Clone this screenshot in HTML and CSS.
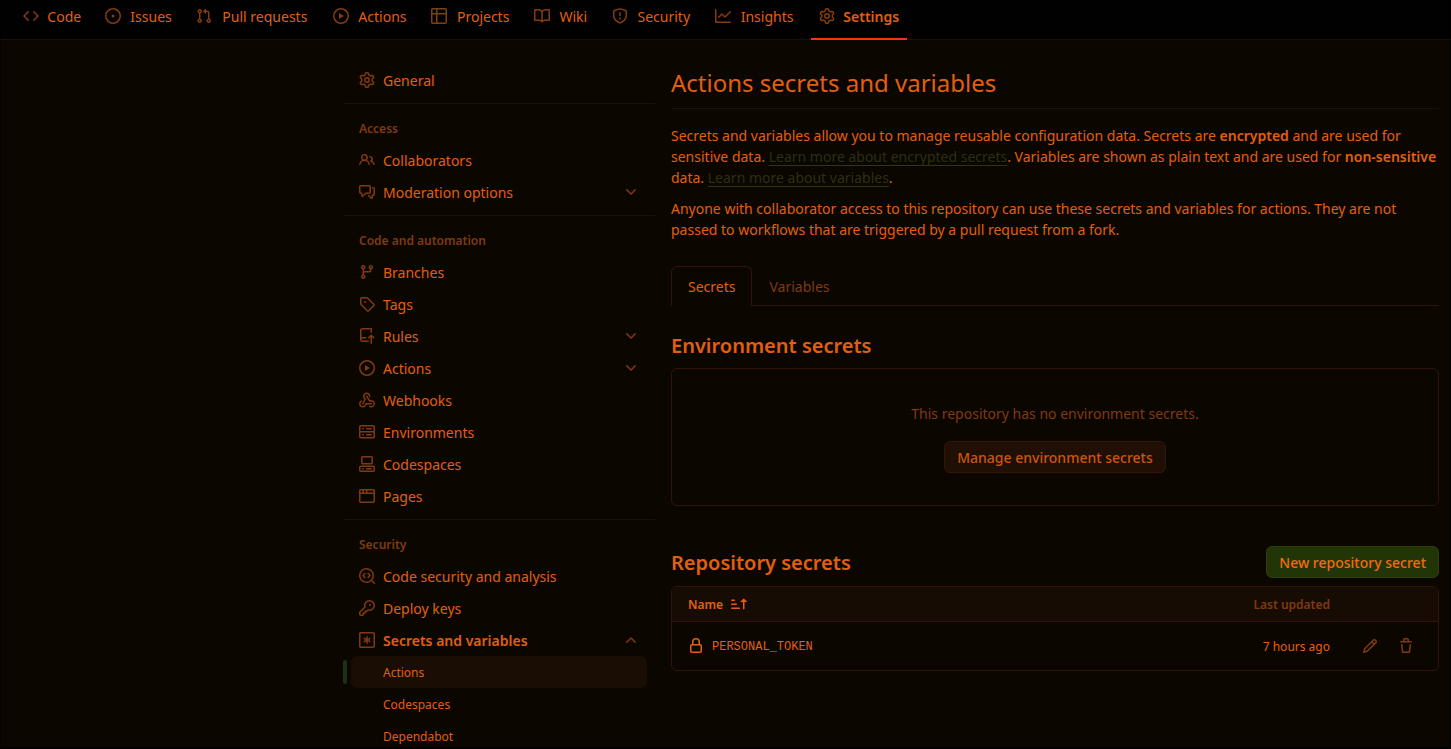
FILE: index.html
```html
<!DOCTYPE html>
<html lang="en">
<head>
<meta charset="utf-8">
<title>Actions secrets and variables</title>
<link rel="stylesheet" href="styles.css">
</head>
<body>
<svg class="sprite" aria-hidden="true">
  <symbol id="gear" viewBox="0 0 16 16"><path d="M8 0a8.2 8.2 0 0 1 .701.031C9.444.095 9.99.645 10.16 1.29l.288 1.107c.018.066.079.158.212.224.231.114.454.243.668.386.123.082.233.09.299.071l1.103-.303c.644-.176 1.392.021 1.82.63.27.385.506.792.704 1.218.315.675.111 1.422-.364 1.891l-.814.806c-.049.048-.098.147-.088.294.016.257.016.515 0 .772-.01.147.038.246.088.294l.814.806c.475.469.679 1.216.364 1.891a7.977 7.977 0 0 1-.704 1.217c-.428.61-1.176.807-1.82.63l-1.102-.302c-.067-.019-.177-.011-.3.071a5.909 5.909 0 0 1-.668.386c-.133.066-.194.158-.211.224l-.29 1.106c-.168.646-.715 1.196-1.458 1.26a8.006 8.006 0 0 1-1.402 0c-.743-.064-1.289-.614-1.458-1.26l-.289-1.106c-.018-.066-.079-.158-.212-.224a5.738 5.738 0 0 1-.668-.386c-.123-.082-.233-.09-.299-.071l-1.103.303c-.644.176-1.392-.021-1.82-.63a8.12 8.12 0 0 1-.704-1.218c-.315-.675-.111-1.422.363-1.891l.815-.806c.05-.048.098-.147.088-.294a6.214 6.214 0 0 1 0-.772c.01-.147-.038-.246-.088-.294l-.815-.806C.635 6.045.431 5.298.746 4.623a7.92 7.92 0 0 1 .704-1.217c.428-.61 1.176-.807 1.82-.63l1.102.302c.067.019.177.011.3-.071.214-.143.437-.272.668-.386.133-.066.194-.158.211-.224l.29-1.106C6.009.645 6.556.095 7.299.03 7.53.01 7.764 0 8 0Zm-.571 1.525c-.036.003-.108.036-.137.146l-.289 1.105c-.147.561-.549.967-.998 1.189-.173.086-.34.183-.5.29-.417.278-.97.423-1.529.27l-1.103-.303c-.109-.03-.175.016-.195.045-.22.312-.412.644-.573.99-.014.031-.021.11.059.19l.815.806c.411.406.562.957.53 1.456a4.709 4.709 0 0 0 0 .582c.032.499-.119 1.05-.53 1.456l-.815.806c-.081.08-.073.159-.059.19.162.346.353.677.573.989.02.03.085.076.195.046l1.102-.303c.56-.153 1.113-.008 1.53.27.161.107.328.204.501.29.447.222.85.629.997 1.189l.289 1.105c.029.109.101.143.137.146a6.6 6.6 0 0 0 1.142 0c.036-.003.108-.036.137-.146l.289-1.105c.147-.561.549-.967.998-1.189.173-.086.34-.183.5-.29.417-.278.97-.423 1.529-.27l1.103.303c.109.029.175-.016.195-.045.22-.313.411-.644.573-.99.014-.031.021-.11-.059-.19l-.815-.806c-.411-.406-.562-.957-.53-1.456a4.709 4.709 0 0 0 0-.582c-.032-.499.119-1.05.53-1.456l.815-.806c.081-.08.073-.159.059-.19a6.464 6.464 0 0 0-.573-.989c-.02-.03-.085-.076-.195-.046l-1.102.303c-.56.153-1.113.008-1.53-.27a4.44 4.44 0 0 0-.501-.29c-.447-.222-.85-.629-.997-1.189l-.289-1.105c-.029-.11-.101-.143-.137-.146a6.6 6.6 0 0 0-1.142 0ZM11 8a3 3 0 1 1-6 0 3 3 0 0 1 6 0ZM9.5 8a1.5 1.5 0 1 0-3.001.001A1.5 1.5 0 0 0 9.5 8Z"/></symbol>
  <symbol id="code" viewBox="0 0 16 16"><path d="m11.28 3.22 4.25 4.25a.75.75 0 0 1 0 1.06l-4.25 4.25a.749.749 0 0 1-1.275-.326.749.749 0 0 1 .215-.734L13.94 8l-3.72-3.72a.749.749 0 0 1 .326-1.275.749.749 0 0 1 .734.215Zm-6.56 0a.751.751 0 0 1 1.042.018.751.751 0 0 1 .018 1.042L2.06 8l3.72 3.72a.749.749 0 0 1-.326 1.275.749.749 0 0 1-.734-.215L.47 8.53a.75.75 0 0 1 0-1.06Z"/></symbol>
  <symbol id="issue" viewBox="0 0 16 16"><path d="M8 9.5a1.5 1.5 0 1 0 0-3 1.5 1.5 0 0 0 0 3Z"/><path d="M8 0a8 8 0 1 1 0 16A8 8 0 0 1 8 0ZM1.5 8a6.5 6.5 0 1 0 13 0 6.5 6.5 0 0 0-13 0Z"/></symbol>
  <symbol id="pull" viewBox="0 0 16 16"><path d="M1.5 3.25a2.25 2.25 0 1 1 3 2.122v5.256a2.251 2.251 0 1 1-1.5 0V5.372A2.25 2.25 0 0 1 1.5 3.25Zm5.677-.177L9.573.677A.25.25 0 0 1 10 .854V2.5h1A2.5 2.5 0 0 1 13.5 5v5.628a2.251 2.251 0 1 1-1.5 0V5a1 1 0 0 0-1-1h-1v1.646a.25.25 0 0 1-.427.177L7.177 3.427a.25.25 0 0 1 0-.354ZM3.75 2.5a.75.75 0 1 0 0 1.5.75.75 0 0 0 0-1.5Zm0 9.5a.75.75 0 1 0 0 1.5.75.75 0 0 0 0-1.5Zm8.25.75a.75.75 0 1 0 1.5 0 .75.75 0 0 0-1.5 0Z"/></symbol>
  <symbol id="play" viewBox="0 0 16 16"><path d="M8 0a8 8 0 1 1 0 16A8 8 0 0 1 8 0ZM1.5 8a6.5 6.5 0 1 0 13 0 6.5 6.5 0 0 0-13 0Zm4.879-2.773 4.264 2.559a.25.25 0 0 1 0 .428l-4.264 2.559A.25.25 0 0 1 6 10.559V5.442a.25.25 0 0 1 .379-.215Z"/></symbol>
  <symbol id="table" viewBox="0 0 16 16"><path d="M0 1.75C0 .784.784 0 1.75 0h12.5C15.216 0 16 .784 16 1.75v12.5A1.75 1.75 0 0 1 14.25 16H1.75A1.75 1.75 0 0 1 0 14.25ZM6.5 6.5v8h7.75a.25.25 0 0 0 .25-.25V6.5Zm8-1.5V1.75a.25.25 0 0 0-.25-.25H6.5V5Zm-13 1.5v7.75c0 .138.112.25.25.25H5v-8ZM5 5V1.5H1.75a.25.25 0 0 0-.25.25V5Z"/></symbol>
  <symbol id="book" viewBox="0 0 16 16"><path d="M0 1.75A.75.75 0 0 1 .75 1h4.253c1.227 0 2.317.59 3 1.501A3.743 3.743 0 0 1 11.006 1h4.245a.75.75 0 0 1 .75.75v10.5a.75.75 0 0 1-.75.75h-4.507a2.25 2.25 0 0 0-1.591.659l-.622.621a.75.75 0 0 1-1.06 0l-.622-.621A2.25 2.25 0 0 0 5.258 13H.75a.75.75 0 0 1-.75-.75Zm7.251 10.324.004-5.073-.002-2.253A2.25 2.25 0 0 0 5.003 2.5H1.5v9h3.757a3.75 3.75 0 0 1 1.994.574ZM8.755 4.75l-.004 7.322a3.752 3.752 0 0 1 1.992-.572H14.5v-9h-3.495a2.25 2.25 0 0 0-2.25 2.25Z"/></symbol>
  <symbol id="shield" viewBox="0 0 16 16"><path d="M7.467.133a1.748 1.748 0 0 1 1.066 0l5.25 1.68A1.75 1.75 0 0 1 15 3.48V7c0 1.566-.32 3.182-1.303 4.682-.983 1.498-2.585 2.813-5.032 3.855a1.697 1.697 0 0 1-1.33 0c-2.447-1.042-4.049-2.357-5.032-3.855C1.32 10.182 1 8.566 1 7V3.48a1.75 1.75 0 0 1 1.217-1.667Zm.61 1.429a.25.25 0 0 0-.153 0l-5.25 1.68a.25.25 0 0 0-.174.238V7c0 1.358.275 2.666 1.057 3.86.784 1.194 2.121 2.34 4.366 3.297a.196.196 0 0 0 .154 0c2.245-.956 3.582-2.104 4.366-3.298C13.225 9.666 13.5 8.36 13.5 7V3.48a.251.251 0 0 0-.174-.237ZM8.75 4.75v3a.75.75 0 0 1-1.5 0v-3a.75.75 0 0 1 1.5 0ZM9 10.5a1 1 0 1 1-2 0 1 1 0 0 1 2 0Z"/></symbol>
  <symbol id="graph" viewBox="0 0 16 16"><path d="M1.5 1.75V13.5h13.75a.75.75 0 0 1 0 1.5H.75a.75.75 0 0 1-.75-.75V1.75a.75.75 0 0 1 1.5 0Zm14.28 2.53-5.25 5.25a.75.75 0 0 1-1.06 0L7 7.06 4.28 9.78a.751.751 0 0 1-1.042-.018.751.751 0 0 1-.018-1.042l3.25-3.25a.75.75 0 0 1 1.06 0L10 7.94l4.72-4.72a.751.751 0 0 1 1.042.018.751.751 0 0 1 .018 1.042Z"/></symbol>
  <symbol id="people" viewBox="0 0 16 16"><path d="M2 5.5a3.5 3.5 0 1 1 5.898 2.549 5.508 5.508 0 0 1 3.034 4.084.75.75 0 1 1-1.482.235 4 4 0 0 0-7.9 0 .75.75 0 0 1-1.482-.236A5.507 5.507 0 0 1 3.102 8.05 3.493 3.493 0 0 1 2 5.5ZM11 4a3.001 3.001 0 0 1 2.22 5.018 5.01 5.01 0 0 1 2.56 3.012.749.749 0 0 1-.885.954.752.752 0 0 1-.549-.514 3.507 3.507 0 0 0-2.522-2.372.75.75 0 0 1-.574-.73v-.352a.75.75 0 0 1 .416-.672A1.5 1.5 0 0 0 11 5.5.75.75 0 0 1 11 4Zm-5.5-.5a2 2 0 1 0-.001 3.999A2 2 0 0 0 5.5 3.5Z"/></symbol>
  <symbol id="comments" viewBox="0 0 16 16"><path d="M1.75 1h8.5c.966 0 1.75.784 1.75 1.75v5.5A1.75 1.75 0 0 1 10.25 10H7.061l-2.574 2.573A1.458 1.458 0 0 1 2 11.543V10h-.25A1.75 1.75 0 0 1 0 8.25v-5.5C0 1.784.784 1 1.75 1ZM1.5 2.75v5.5c0 .138.112.25.25.25h1a.75.75 0 0 1 .75.75v2.19l2.72-2.72a.749.749 0 0 1 .53-.22h3.5a.25.25 0 0 0 .25-.25v-5.5a.25.25 0 0 0-.25-.25h-8.5a.25.25 0 0 0-.25.25Zm13 2a.25.25 0 0 0-.25-.25h-.5a.75.75 0 0 1 0-1.5h.5c.966 0 1.75.784 1.75 1.75v5.5A1.75 1.75 0 0 1 14.25 12H14v1.543a1.458 1.458 0 0 1-2.487 1.03L9.22 12.28a.749.749 0 0 1 .326-1.275.749.749 0 0 1 .734.215l2.22 2.22v-2.19a.75.75 0 0 1 .75-.75h1a.25.25 0 0 0 .25-.25Z"/></symbol>
  <symbol id="branch" viewBox="0 0 16 16"><path d="M9.5 3.25a2.25 2.25 0 1 1 3 2.122V6A2.5 2.5 0 0 1 10 8.5H6a1 1 0 0 0-1 1v1.128a2.251 2.251 0 1 1-1.5 0V5.372a2.25 2.25 0 1 1 1.5 0v1.836A2.493 2.493 0 0 1 6 7h4a1 1 0 0 0 1-1v-.628A2.25 2.25 0 0 1 9.5 3.25Zm-6 0a.75.75 0 1 0 1.5 0 .75.75 0 0 0-1.5 0Zm8.25-.75a.75.75 0 1 0 0 1.5.75.75 0 0 0 0-1.5ZM4.25 12a.75.75 0 1 0 0 1.5.75.75 0 0 0 0-1.5Z"/></symbol>
  <symbol id="tag" viewBox="0 0 16 16"><path d="M1 7.775V2.75C1 1.784 1.784 1 2.75 1h5.025c.464 0 .91.184 1.238.513l6.25 6.25a1.75 1.75 0 0 1 0 2.474l-5.026 5.026a1.75 1.75 0 0 1-2.474 0l-6.25-6.25A1.752 1.752 0 0 1 1 7.775Zm1.5 0c0 .066.026.13.073.177l6.25 6.25a.25.25 0 0 0 .354 0l5.025-5.025a.25.25 0 0 0 0-.354l-6.25-6.25a.25.25 0 0 0-.177-.073H2.75a.25.25 0 0 0-.25.25ZM6 5a1 1 0 1 1 0 2 1 1 0 0 1 0-2Z"/></symbol>
  <symbol id="repo-push" viewBox="0 0 16 16"><path d="M1 2.5A2.5 2.5 0 0 1 3.5 0h8.75a.75.75 0 0 1 .75.75v3.5a.75.75 0 0 1-1.5 0V1.5h-8a1 1 0 0 0-1 1v6.708A2.493 2.493 0 0 1 3.5 9h3.25a.75.75 0 0 1 0 1.5H3.5a1 1 0 0 0 0 2h5.75a.75.75 0 0 1 0 1.5H3.5A2.5 2.5 0 0 1 1 11.5Zm13.23 7.79-1.23-1.228v6.19a.75.75 0 0 1-1.5 0v-6.19l-1.22 1.23a.75.75 0 1 1-1.06-1.062l2.5-2.505a.75.75 0 0 1 1.06 0l2.51 2.505a.75.75 0 1 1-1.06 1.062Z"/></symbol>
  <symbol id="webhook" viewBox="0 0 16 16"><path d="M5.5 4.25a2.25 2.25 0 0 1 4.5 0 .75.75 0 0 0 1.5 0 3.75 3.75 0 1 0-6.14 2.889l-2.272 4.258a.75.75 0 0 0 1.324.706L7 7.25a.75.75 0 0 0-.309-1.015A2.25 2.25 0 0 1 5.5 4.25Z"/><path d="M7.364 3.607a.75.75 0 0 1 1.03.257l2.608 4.349a3.75 3.75 0 1 1-.628 6.785.75.75 0 0 1 .752-1.299 2.25 2.25 0 1 0-.033-3.88.75.75 0 0 1-1.03-.256L7.107 4.636a.75.75 0 0 1 .257-1.03Z"/><path d="M2.9 8.776A.75.75 0 0 1 2.625 9.8 2.25 2.25 0 1 0 6 11.75a.75.75 0 0 1 .75-.751h5.5a.75.75 0 0 1 0 1.5H7.425a3.751 3.751 0 1 1-5.55-3.998.75.75 0 0 1 1.024.274Z"/></symbol>
  <symbol id="server" viewBox="0 0 16 16"><path d="M1.75 1h12.5c.966 0 1.75.784 1.75 1.75v4c0 .372-.116.717-.314 1 .198.283.314.628.314 1v4a1.75 1.75 0 0 1-1.75 1.75H1.75A1.75 1.75 0 0 1 0 12.75v-4c0-.358.109-.707.314-1a1.739 1.739 0 0 1-.314-1v-4C0 1.784.784 1 1.75 1ZM1.5 2.75v4c0 .138.112.25.25.25h12.5a.25.25 0 0 0 .25-.25v-4a.25.25 0 0 0-.25-.25H1.75a.25.25 0 0 0-.25.25Zm.25 5.75a.25.25 0 0 0-.25.25v4c0 .138.112.25.25.25h12.5a.25.25 0 0 0 .25-.25v-4a.25.25 0 0 0-.25-.25ZM7 4.75A.75.75 0 0 1 7.75 4h4.5a.75.75 0 0 1 0 1.5h-4.5A.75.75 0 0 1 7 4.75ZM7.75 10h4.5a.75.75 0 0 1 0 1.5h-4.5a.75.75 0 0 1 0-1.5ZM3 4.75A.75.75 0 0 1 3.75 4h.5a.75.75 0 0 1 0 1.5h-.5A.75.75 0 0 1 3 4.75ZM3.75 10h.5a.75.75 0 0 1 0 1.5h-.5a.75.75 0 0 1 0-1.5Z"/></symbol>
  <symbol id="codespaces" viewBox="0 0 16 16"><path d="M0 11.25c0-.966.784-1.75 1.75-1.75h12.5c.966 0 1.75.784 1.75 1.75v3A1.75 1.75 0 0 1 14.25 16H1.75A1.75 1.75 0 0 1 0 14.25Zm2-9.5C2 .784 2.784 0 3.75 0h8.5C13.216 0 14 .784 14 1.75v5a1.75 1.75 0 0 1-1.75 1.75h-8.5A1.75 1.75 0 0 1 2 6.75Zm1.75-.25a.25.25 0 0 0-.25.25v5c0 .138.112.25.25.25h8.5a.25.25 0 0 0 .25-.25v-5a.25.25 0 0 0-.25-.25Zm-2 9.5a.25.25 0 0 0-.25.25v3c0 .138.112.25.25.25h12.5a.25.25 0 0 0 .25-.25v-3a.25.25 0 0 0-.25-.25Z"/><path d="M7 12.75a.75.75 0 0 1 .75-.75h4.5a.75.75 0 0 1 0 1.5h-4.5a.75.75 0 0 1-.75-.75Zm-4 0a.75.75 0 0 1 .75-.75h.5a.75.75 0 0 1 0 1.5h-.5a.75.75 0 0 1-.75-.75Z"/></symbol>
  <symbol id="browser" viewBox="0 0 16 16"><path d="M0 2.75C0 1.784.784 1 1.75 1h12.5c.966 0 1.75.784 1.75 1.75v10.5A1.75 1.75 0 0 1 14.25 15H1.75A1.75 1.75 0 0 1 0 13.25ZM14.5 6h-13v7.25c0 .138.112.25.25.25h12.5a.25.25 0 0 0 .25-.25Zm-6-3.5v2h6V2.75a.25.25 0 0 0-.25-.25ZM5 2.5v2h2v-2Zm-3.25 0a.25.25 0 0 0-.25.25V4.5h2v-2Z"/></symbol>
  <symbol id="codescan" viewBox="0 0 16 16"><path d="M8.47 4.97a.75.75 0 0 0 0 1.06L9.94 7.5 8.47 8.97a.75.75 0 1 0 1.06 1.06l2-2a.75.75 0 0 0 0-1.06l-2-2a.75.75 0 0 0-1.06 0ZM6.53 6.03a.75.75 0 0 0-1.06-1.06l-2 2a.75.75 0 0 0 0 1.06l2 2a.75.75 0 1 0 1.06-1.06L5.06 7.5l1.47-1.47Z"/><path d="M12.246 13.307a7.501 7.501 0 1 1 1.06-1.06l2.474 2.473a.749.749 0 0 1-.326 1.275.749.749 0 0 1-.734-.215ZM1.5 7.5a6.002 6.002 0 0 0 3.608 5.504 6.002 6.002 0 0 0 6.486-1.117.748.748 0 0 1 .292-.293A6 6 0 1 0 1.5 7.5Z"/></symbol>
  <symbol id="key" viewBox="0 0 16 16"><path d="M10.5 0a5.499 5.499 0 1 1-1.288 10.848l-.932.932a.749.749 0 0 1-.53.22H7v.75a.749.749 0 0 1-.22.53l-.5.5a.749.749 0 0 1-.53.22H5v.75a.749.749 0 0 1-.22.53l-.5.5a.749.749 0 0 1-.53.22h-2A1.75 1.75 0 0 1 0 14.25v-2c0-.199.079-.389.22-.53l4.932-4.932A5.5 5.5 0 0 1 10.5 0Zm-4 5.5c-.001.431.069.86.205 1.269a.75.75 0 0 1-.181.768L1.5 12.56v1.69c0 .138.112.25.25.25h1.69l.06-.06v-1.19a.75.75 0 0 1 .75-.75h1.19l.06-.06v-1.19a.75.75 0 0 1 .75-.75h1.19l1.023-1.025a.75.75 0 0 1 .768-.18A4 4 0 1 0 6.5 5.5ZM11 6a1 1 0 1 1 0-2 1 1 0 0 1 0 2Z"/></symbol>
  <symbol id="asterisk" viewBox="0 0 16 16"><path d="M0 1.75C0 .784.784 0 1.75 0h12.5C15.216 0 16 .784 16 1.75v12.5A1.75 1.75 0 0 1 14.25 16H1.75A1.75 1.75 0 0 1 0 14.25Zm1.75-.25a.25.25 0 0 0-.25.25v12.5c0 .138.112.25.25.25h12.5a.25.25 0 0 0 .25-.25V1.75a.25.25 0 0 0-.25-.25ZM8 4a.75.75 0 0 1 .75.75V6.7l1.69-.975a.75.75 0 0 1 .75 1.3L9.5 8l1.69.976a.75.75 0 0 1-.75 1.298L8.75 9.3v1.951a.75.75 0 0 1-1.5 0V9.299l-1.69.976a.75.75 0 0 1-.75-1.3L6.5 8l-1.69-.975a.75.75 0 0 1 .75-1.3l1.69.976V4.75A.75.75 0 0 1 8 4Z"/></symbol>
  <symbol id="down" viewBox="0 0 16 16"><path d="M12.78 5.22a.749.749 0 0 1 0 1.06l-4.25 4.25a.749.749 0 0 1-1.06 0L3.22 6.28a.749.749 0 1 1 1.06-1.06L8 8.939l3.72-3.719a.749.749 0 0 1 1.06 0Z"/></symbol>
  <symbol id="sort" viewBox="0 0 16 16"><path d="m12.927 2.573 3 3A.25.25 0 0 1 15.75 6H13.5v6.75a.75.75 0 0 1-1.5 0V6H9.75a.25.25 0 0 1-.177-.427l3-3a.25.25 0 0 1 .354 0ZM0 12.25a.75.75 0 0 1 .75-.75h7.5a.75.75 0 0 1 0 1.5H.75a.75.75 0 0 1-.75-.75Zm0-4a.75.75 0 0 1 .75-.75h4.5a.75.75 0 0 1 0 1.5H.75A.75.75 0 0 1 0 8.25Zm0-4a.75.75 0 0 1 .75-.75h2.5a.75.75 0 0 1 0 1.5H.75A.75.75 0 0 1 0 4.25Z"/></symbol>
  <symbol id="lock" viewBox="0 0 16 16"><path d="M4 4a4 4 0 0 1 8 0v2h.25c.966 0 1.75.784 1.75 1.75v5.5A1.75 1.75 0 0 1 12.25 15h-8.5A1.75 1.75 0 0 1 2 13.25v-5.5C2 6.784 2.784 6 3.75 6H4Zm8.25 3.5h-8.5a.25.25 0 0 0-.25.25v5.5c0 .138.112.25.25.25h8.5a.25.25 0 0 0 .25-.25v-5.5a.25.25 0 0 0-.25-.25ZM10.5 6V4a2.5 2.5 0 1 0-5 0v2Z"/></symbol>
  <symbol id="pencil" viewBox="0 0 16 16"><path d="M11.013 1.427a1.75 1.75 0 0 1 2.474 0l1.086 1.086a1.75 1.75 0 0 1 0 2.474l-8.61 8.61c-.21.21-.47.364-.756.445l-3.251.93a.75.75 0 0 1-.927-.928l.929-3.25c.081-.286.235-.547.445-.758l8.61-8.61Zm.176 4.823L9.75 4.81l-6.286 6.287a.253.253 0 0 0-.064.108l-.558 1.953 1.953-.558a.253.253 0 0 0 .108-.064Zm1.238-3.763a.25.25 0 0 0-.354 0L10.811 3.75l1.439 1.44 1.263-1.263a.25.25 0 0 0 0-.354Z"/></symbol>
  <symbol id="trash" viewBox="0 0 16 16"><path d="M11 1.75V3h2.25a.75.75 0 0 1 0 1.5H2.75a.75.75 0 0 1 0-1.5H5V1.75C5 .784 5.784 0 6.75 0h2.5C10.216 0 11 .784 11 1.75ZM4.496 6.675l.66 6.6a.25.25 0 0 0 .249.225h5.19a.25.25 0 0 0 .249-.225l.66-6.6a.75.75 0 0 1 1.492.149l-.66 6.6A1.748 1.748 0 0 1 10.595 15h-5.19a1.75 1.75 0 0 1-1.741-1.575l-.66-6.6a.75.75 0 1 1 1.492-.15ZM6.5 1.75V3h3V1.75a.25.25 0 0 0-.25-.25h-2.5a.25.25 0 0 0-.25.25Z"/></symbol>
</svg>

<nav class="topnav">
  <a class="tab"><svg class="icon"><use href="#code"/></svg><span data-content="Code">Code</span></a>
  <a class="tab"><svg class="icon"><use href="#issue"/></svg><span data-content="Issues">Issues</span></a>
  <a class="tab"><svg class="icon"><use href="#pull"/></svg><span data-content="Pull requests">Pull requests</span></a>
  <a class="tab"><svg class="icon"><use href="#play"/></svg><span data-content="Actions">Actions</span></a>
  <a class="tab"><svg class="icon"><use href="#table"/></svg><span data-content="Projects">Projects</span></a>
  <a class="tab"><svg class="icon"><use href="#book"/></svg><span data-content="Wiki">Wiki</span></a>
  <a class="tab"><svg class="icon"><use href="#shield"/></svg><span data-content="Security">Security</span></a>
  <a class="tab"><svg class="icon"><use href="#graph"/></svg><span data-content="Insights">Insights</span></a>
  <a class="tab selected"><svg class="icon"><use href="#gear"/></svg><span data-content="Settings">Settings</span></a>
</nav>

<div class="layout">
  <aside class="sidebar">
    <a class="item"><svg class="icon"><use href="#gear"/></svg>General</a>
    <hr class="divider">
    <h3 class="group">Access</h3>
    <a class="item"><svg class="icon"><use href="#people"/></svg>Collaborators</a>
    <a class="item"><svg class="icon"><use href="#comments"/></svg>Moderation options<svg class="icon chevron"><use href="#down"/></svg></a>
    <hr class="divider">
    <h3 class="group">Code and automation</h3>
    <a class="item"><svg class="icon"><use href="#branch"/></svg>Branches</a>
    <a class="item"><svg class="icon"><use href="#tag"/></svg>Tags</a>
    <a class="item"><svg class="icon"><use href="#repo-push"/></svg>Rules<svg class="icon chevron"><use href="#down"/></svg></a>
    <a class="item"><svg class="icon"><use href="#play"/></svg>Actions<svg class="icon chevron"><use href="#down"/></svg></a>
    <a class="item"><svg class="icon"><use href="#webhook"/></svg>Webhooks</a>
    <a class="item"><svg class="icon"><use href="#server"/></svg>Environments</a>
    <a class="item"><svg class="icon"><use href="#codespaces"/></svg>Codespaces</a>
    <a class="item"><svg class="icon"><use href="#browser"/></svg>Pages</a>
    <hr class="divider">
    <h3 class="group">Security</h3>
    <a class="item"><svg class="icon"><use href="#codescan"/></svg>Code security and analysis</a>
    <a class="item"><svg class="icon"><use href="#key"/></svg>Deploy keys</a>
    <a class="item open"><svg class="icon"><use href="#asterisk"/></svg>Secrets and variables<svg class="icon chevron up"><use href="#down"/></svg></a>
    <a class="item sub current">Actions</a>
    <a class="item sub">Codespaces</a>
    <a class="item sub">Dependabot</a>
  </aside>

  <main class="main">
    <h1 class="title">Actions secrets and variables</h1>
    <p class="text">Secrets and variables allow you to manage reusable configuration data. Secrets are <strong>encrypted</strong> and are used for sensitive data. <a class="link">Learn more about encrypted secrets</a>. Variables are shown as plain text and are used for <strong>non-sensitive</strong> data. <a class="link">Learn more about variables</a>.</p>
    <p class="text">Anyone with collaborator access to this repository can use these secrets and variables for actions. They are not passed to workflows that are triggered by a pull request from a fork.</p>

    <div class="tabs">
      <a class="tabs-item active">Secrets</a>
      <a class="tabs-item">Variables</a>
    </div>

    <h2 class="heading">Environment secrets</h2>
    <section class="blank">
      <p class="blank-text">This repository has no environment secrets.</p>
      <button class="btn">Manage environment secrets</button>
    </section>

    <div class="heading-row">
      <h2 class="heading">Repository secrets</h2>
      <button class="btn primary">New repository secret</button>
    </div>
    <section class="secrets">
      <div class="row head">
        <span class="name">Name<svg class="icon"><use href="#sort"/></svg></span>
        <span class="updated">Last updated</span>
      </div>
      <div class="row">
        <span class="name"><svg class="icon"><use href="#lock"/></svg><code class="secret">PERSONAL_TOKEN</code></span>
        <span class="updated">7 hours ago</span>
        <svg class="icon action"><use href="#pencil"/></svg>
        <svg class="icon action"><use href="#trash"/></svg>
      </div>
    </section>
  </main>
</div>
</body>
</html>
```

FILE: styles.css
```css
:root {
  --bg: #0c0600;
  --fg: #e06010;
  --muted: #803a10;
  --border: #2e1507;
  --faint: #1d0f06;
}

* { box-sizing: border-box; }

body {
  position: relative;
  margin: 0;
  height: 749px;
  overflow: hidden;
  background: var(--bg);
  color: var(--fg);
  font: 14px/21px "Noto Sans", sans-serif;
}

/* Dark window edge over the page */
body::after {
  content: "";
  position: absolute;
  inset: 0;
  border: solid rgba(0, 0, 0, 0.6);
  border-width: 0 1px 2px;
  pointer-events: none;
}

h1, h2, h3, p { margin: 0; }
strong { font-weight: 600; }

.sprite { display: none; }

.icon {
  width: 16px;
  height: 16px;
  flex: none;
  fill: currentColor;
}

/* Repository navigation */
.topnav {
  display: flex;
  gap: 8px;
  height: 40px;
  padding-left: 14.6px;
  background: #010101;
  border-bottom: 1px solid var(--faint);
}

.tab {
  display: flex;
  align-items: center;
  gap: 8px;
  height: 40px;
  padding: 0 8px 8px;
}

.tab .icon { color: #843c10; }

.tab span {
  padding-left: 0.4px;
  text-align: center;
}

.tab:not(.selected) span { margin-right: -0.35px; }

.tab span::before {
  content: attr(data-content);
  display: block;
  height: 0;
  overflow: hidden;
  visibility: hidden;
  font-weight: 600;
}

.tab.selected {
  margin-left: 0.6px;
  font-weight: 600;
  padding-bottom: 6px;
  border-bottom: 2px solid #f63312;
}

/* Page columns */
.layout {
  display: flex;
  gap: 16px;
  padding: 24px 12px 0 343px;
}

.sidebar {
  width: 312px;
  flex: none;
}

.item {
  display: flex;
  align-items: center;
  gap: 8px;
  height: 32px;
  margin: 0 8px;
  padding: 0 8px;
  border-radius: 6px;
}

.item .icon { color: var(--muted); }
.item .chevron { margin-left: auto; }
.item .up { transform: rotate(180deg); }
.item.open { font-weight: 600; }

.item.sub {
  position: relative;
  padding-left: 32px;
  font-size: 12px;
}

.item.current { background: #1a0d04; }

.item.current::before {
  content: "";
  position: absolute;
  left: -8px;
  top: 4px;
  width: 4px;
  height: 24px;
  border-radius: 2px;
  background: #1d3213;
}

.divider {
  height: 1px;
  margin: 7px 0 8px;
  border: 0;
  background: var(--faint);
}

.group {
  height: 32px;
  padding-left: 16px;
  color: var(--muted);
  font-size: 12px;
  font-weight: 600;
  line-height: 33px;
}

/* Main column */
.main { flex: 1; min-width: 0; }

.title {
  height: 45px;
  margin-bottom: 16px;
  border-bottom: 1px solid #220f05;
  font-size: 24px;
  font-weight: 400;
  line-height: 38px;
}

.text { margin-bottom: 10px; }

.link {
  color: #2c2f13;
  text-decoration: underline;
  text-decoration-color: #2d3514;
  text-underline-offset: 3.2px;
}

.tabs {
  display: flex;
  height: 40px;
  margin: 26px 0 27px;
  border-bottom: 1px solid var(--border);
}

.tabs-item {
  height: 40px;
  padding: 0 17px;
  color: var(--muted);
  line-height: 41px;
}

.tabs-item.active {
  padding: 0 16px;
  border: 1px solid var(--border);
  border-bottom: 0;
  border-radius: 6px 6px 0 0;
  background: var(--bg);
  color: var(--fg);
  line-height: 39px;
}

.heading {
  font-size: 20px;
  font-weight: 600;
  line-height: 26px;
}

.blank {
  display: flex;
  flex-direction: column;
  align-items: center;
  gap: 17px;
  height: 138px;
  margin: 9px 0 40px;
  padding-top: 34px;
  border: 1px solid var(--border);
  border-radius: 6px;
}

.blank-text { color: var(--muted); }

.btn {
  height: 32px;
  padding: 1px 12px 0;
  border: 1px solid #341607;
  border-radius: 6px;
  background: #200f04;
  color: #cb560e;
  font: 500 14px/29px "Noto Sans", sans-serif;
}

.btn.primary {
  border-color: #2d400b;
  background: #223506;
  color: #f26c0e;
}

.heading-row {
  display: flex;
  align-items: center;
  justify-content: space-between;
  margin-bottom: 8px;
}

.heading-row .heading { padding-top: 2px; }

.secrets {
  border: 1px solid var(--border);
  border-radius: 6px;
  overflow: hidden;
  font-size: 12px;
}

.row {
  display: flex;
  align-items: center;
  height: 48px;
  padding: 0 24px 0 16px;
}

.row.head {
  height: 35px;
  padding-right: 108px;
  border-bottom: 1px solid var(--border);
  background: #170c04;
  font-weight: 600;
}

.name {
  display: flex;
  align-items: center;
  gap: 8px;
  margin-right: auto;
}

.head .updated { color: var(--muted); }

.secret {
  padding-top: 2px;
  font: 12px/18px "Liberation Mono", monospace;
}

.action {
  margin-left: 20px;
  color: var(--muted);
}

.updated + .action { margin-left: 32px; }
```
